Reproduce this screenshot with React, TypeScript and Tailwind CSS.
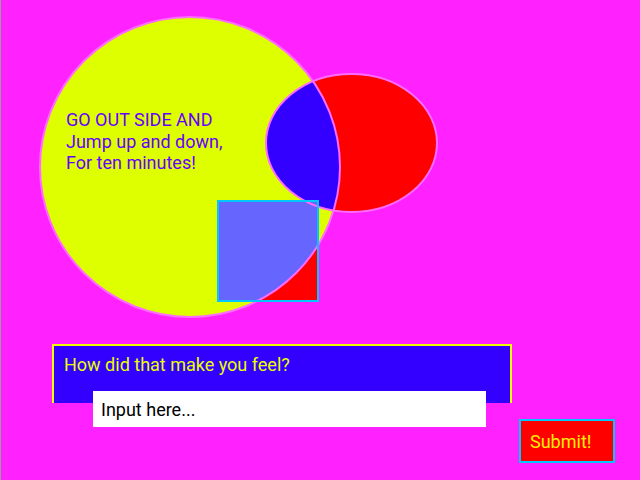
export default function App() {
  const font = { fontFamily: "Roboto, 'Liberation Sans', sans-serif" };

  return (
    <div
      className="relative flex h-[480px] w-[640px] flex-col overflow-hidden border-l border-[#9a9a9a] bg-[#ff22ff]"
      style={font}
    >
      {/* shapes */}
      <svg width="639" height="344" viewBox="0 0 639 344" className="block shrink-0">
        <defs>
          <clipPath id="big">
            <circle cx="189" cy="167" r="150" />
          </clipPath>
        </defs>
        <circle cx="189" cy="167" r="150" fill="#ddff00" />
        <ellipse cx="350.5" cy="143" rx="85.5" ry="69" fill="#ff0000" />
        <ellipse cx="350.5" cy="143" rx="85.5" ry="69" fill="#3300ff" clipPath="url(#big)" />
        <rect x="217" y="201" width="100" height="100" fill="#ff0000" />
        <rect x="217" y="201" width="100" height="100" fill="#6666ff" clipPath="url(#big)" />
        <circle cx="189" cy="167" r="150" fill="none" stroke="#ff6bff" strokeWidth="2" />
        <ellipse cx="350.5" cy="143" rx="85.5" ry="69" fill="none" stroke="#ff6bff" strokeWidth="2" />
        <rect x="217" y="201" width="100" height="100" fill="none" stroke="#00c8ff" strokeWidth="2" />
      </svg>

      <p className="absolute left-[65px] top-[109px] text-[18px] leading-[21.5px] text-[#6600ff]">
        GO OUT SIDE AND
        <br />
        Jump up and down,
        <br />
        For ten minutes!
      </p>

      {/* question panel */}
      <div className="ml-[51px] h-[59px] w-[460px] border-x-2 border-t-2 border-[#eeff00] bg-[#3300ff] pl-[10px] pt-[8px]">
        <p className="text-[18px] leading-[21.5px] text-[#e8ff00]">How did that make you feel?</p>
      </div>

      <div className="relative -mt-[12px] flex items-start">
        <input
          type="text"
          placeholder="Input here..."
          className="ml-[92px] h-[36px] w-[393px] bg-white pl-[8px] text-[18px] text-black outline-none placeholder:text-black"
          style={font}
        />
        <button
          type="button"
          className="ml-[33px] mt-[28px] h-[44px] w-[96px] border-2 border-[#00c8ff] bg-[#ff0000] pl-[9px] text-left text-[18px] text-[#ffee00]"
          style={font}
        >
          Submit!
        </button>
      </div>
    </div>
  );
}
